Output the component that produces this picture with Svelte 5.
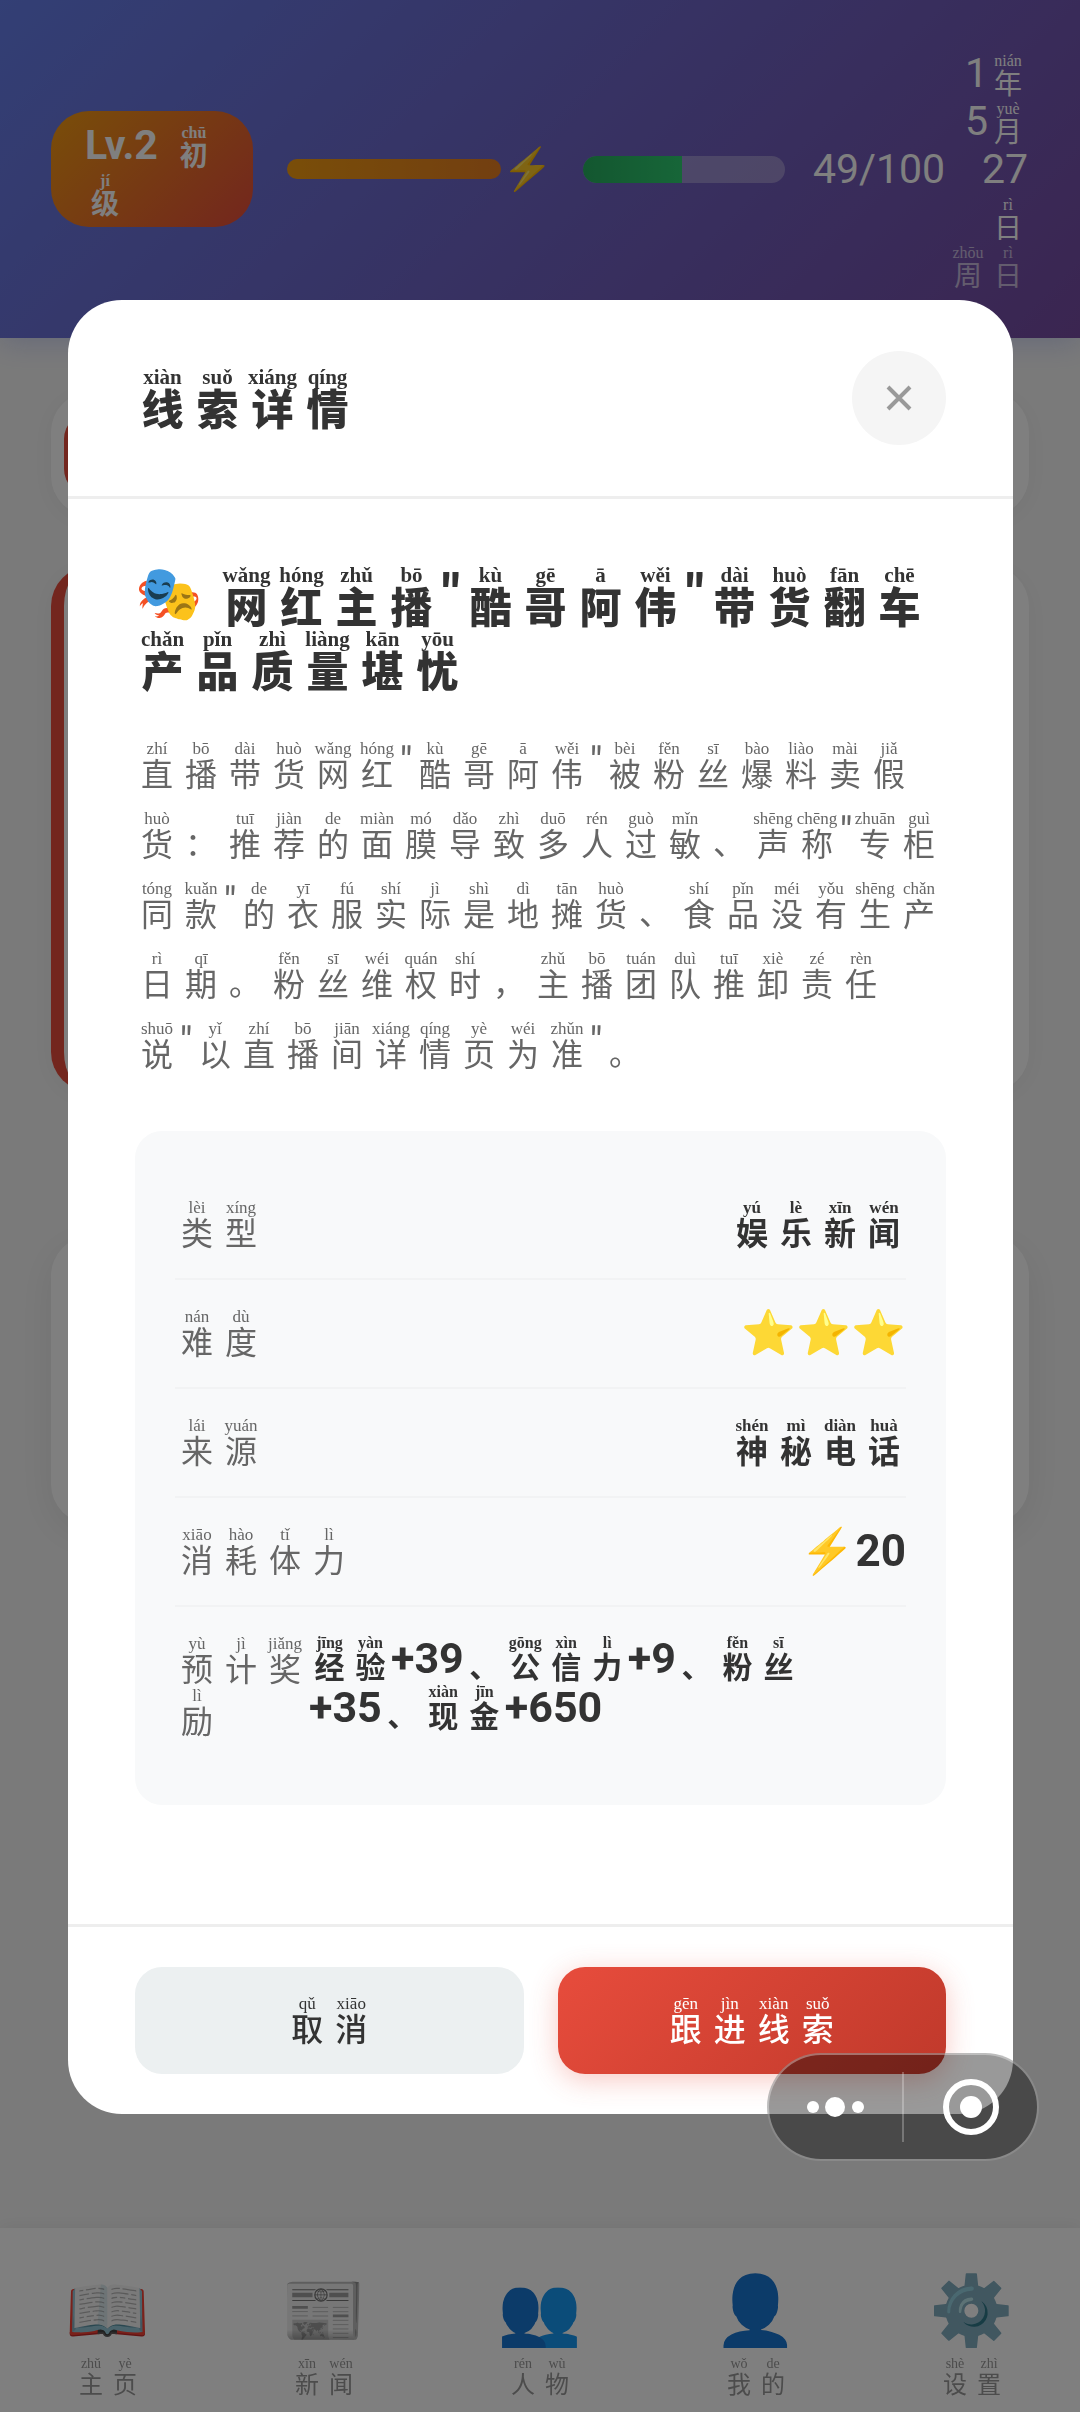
<script>
  const level = 'Lv.2 初chū 级jí';
  const date = ['1 年nián', '5 月yuè', '27', '日rì'];
  const weekday = '周zhōu 日rì';
  const energy = { value: 49, max: 100 };

  const clue = {
    title:
      '网wǎng 红hóng 主zhǔ 播bō " 酷kù 哥gē 阿ā 伟wěi " 带dài 货huò 翻fān 车chē 产chǎn 品pǐn 质zhì 量liàng 堪kān 忧yōu',
    description:
      '直zhí 播bō 带dài 货huò 网wǎng 红hóng " 酷kù 哥gē 阿ā 伟wěi " 被bèi 粉fěn 丝sī 爆bào 料liào 卖mài 假jiǎ 货huò ： ' +
      '推tuī 荐jiàn 的de 面miàn 膜mó 导dǎo 致zhì 多duō 人rén 过guò 敏mǐn 、 声shēng 称chēng " 专zhuān 柜guì 同tóng 款kuǎn " ' +
      '的de 衣yī 服fú 实shí 际jì 是shì 地dì 摊tān 货huò 、 食shí 品pǐn 没méi 有yǒu 生shēng 产chǎn 日rì 期qī 。 ' +
      '粉fěn 丝sī 维wéi 权quán 时shí ， 主zhǔ 播bō 团tuán 队duì 推tuī 卸xiè 责zé 任rèn 说shuō_"_以yǐ ' +
      '直zhí 播bō 间jiān 详xiáng 情qíng 页yè 为wéi 准zhǔn " 。'
  };

  const rows = [
    { label: '类lèi 型xíng', value: '娱yú 乐lè 新xīn 闻wén' },
    { label: '难nán 度dù', value: '⭐⭐⭐' },
    { label: '来lái 源yuán', value: '神shén 秘mì 电diàn 话huà' },
    { label: '消xiāo 耗hào 体tǐ 力lì', value: '⚡ 20' },
    {
      label: '预yù 计jì 奖jiǎng 励lì',
      value: '经jīng 验yàn +39 、 公gōng 信xìn 力lì +9 、 粉fěn 丝sī +35_、_现xiàn 金jīn +650',
      wide: true
    }
  ];

  const tabs = [
    { icon: '📖', label: '主zhǔ 页yè' },
    { icon: '📰', label: '新xīn 闻wén' },
    { icon: '👥', label: '人rén 物wù' },
    { icon: '👤', label: '我wǒ 的de' },
    { icon: '⚙️', label: '设shè 置zhì' }
  ];

  // "字zì" tokens are split by spaces, "_" keeps tokens on one line
  function parse(text) {
    return text.split(' ').map((group) =>
      group.split('_').map((token) => {
        if (/^[\u4e00-\u9fff]/.test(token)) return { type: 'zi', char: token[0], pinyin: token.slice(1) };
        if (/^[、，。：]/.test(token)) return { type: 'mark', char: token };
        if (token === '"') return { type: 'quote', char: token };
        return { type: 'latin', char: token };
      })
    );
  }
</script>

{#snippet pinyin(text)}
  {#each parse(text) as group}<span class="group">{#each group as t}{#if t.type === 'zi'}<span class="zi"><span class="py">{t.pinyin}</span><span class="han">{t.char}</span></span>{:else}<span class={t.type}>{t.char}</span>{/if}{/each}</span><wbr />{/each}
{/snippet}

<div class="page">
  <header class="status-bar">
    <div class="level">{@render pinyin(level)}</div>
    <div class="exp">
      <div class="exp-bar"></div>
      <span class="bolt">⚡</span>
    </div>
    <div class="energy-bar">
      <div class="energy-fill" style="width: {(energy.value / energy.max) * 100}%"></div>
    </div>
    <span class="energy-text">{energy.value}/{energy.max}</span>
    <div class="date">
      {#each date as line}
        <div>{@render pinyin(line)}</div>
      {/each}
      <div class="weekday">{@render pinyin(weekday)}</div>
    </div>
  </header>

  <main class="content">
    <div class="card filter"><div class="filter-active"></div></div>
    <div class="card news"></div>
    <div class="card summary"></div>
  </main>

  <nav class="tab-bar">
    {#each tabs as tab}
      <a class="tab" href="#tab">
        <span class="tab-icon">{tab.icon}</span>
        <span class="tab-label">{@render pinyin(tab.label)}</span>
      </a>
    {/each}
  </nav>
</div>

<div class="overlay">
  <div class="modal" role="dialog" aria-modal="true">
    <div class="modal-header">
      <h2 class="modal-title">{@render pinyin('线xiàn 索suǒ 详xiáng 情qíng')}</h2>
      <button class="modal-close" aria-label="close">
        <svg viewBox="0 0 26 26" width="26" height="26" fill="none" stroke="#999" stroke-width="4">
          <path d="M2 2l22 22M24 2L2 24" />
        </svg>
      </button>
    </div>

    <div class="modal-body">
      <h3 class="clue-title"><span class="clue-icon">🎭</span>{@render pinyin(clue.title)}</h3>
      <p class="clue-desc">{@render pinyin(clue.description)}</p>
      <dl class="info">
        {#each rows as row}
          <div class="info-row" class:wide={row.wide}>
            <dt>{@render pinyin(row.label)}</dt>
            <dd>{@render pinyin(row.value)}</dd>
          </div>
        {/each}
      </dl>
    </div>

    <div class="modal-footer">
      <button class="btn cancel">{@render pinyin('取qǔ 消xiāo')}</button>
      <button class="btn confirm">{@render pinyin('跟gēn 进jìn 线xiàn 索suǒ')}</button>
    </div>
  </div>
</div>

<div class="capsule">
  <button aria-label="menu">
    <svg viewBox="0 0 60 60" width="60" height="60" fill="#fff">
      <circle cx="7" cy="30" r="6" />
      <circle cx="29" cy="30" r="10" />
      <circle cx="52" cy="30" r="6" />
    </svg>
  </button>
  <span class="capsule-line"></span>
  <button aria-label="exit">
    <svg viewBox="0 0 60 60" width="60" height="60">
      <circle cx="30" cy="30" r="25" fill="none" stroke="#fff" stroke-width="6" />
      <circle cx="30" cy="30" r="11" fill="#fff" />
    </svg>
  </button>
</div>

<style>
  :global(body) {
    margin: 0;
    background: #f5f5f5;
  }

  .page,
  .overlay {
    --cell: 44px;
    --han: 32px;
    --py: 17px;
    font-family: Roboto, 'Noto Sans CJK SC', 'Noto Color Emoji', sans-serif;
    box-sizing: border-box;
  }

  /* pinyin text */
  .group {
    white-space: nowrap;
  }

  .zi,
  .mark {
    display: inline-block;
    width: var(--cell);
    margin: -8px 0;
    text-align: center;
    vertical-align: middle;
    font-size: var(--han);
    line-height: 1;
  }

  .py {
    display: flex;
    justify-content: center;
    padding-bottom: 2px;
    font-family: 'Liberation Serif', serif;
    font-size: var(--py);
    line-height: 1;
  }

  .han,
  .mark {
    font-family: 'Liberation Sans', 'Noto Sans CJK SC', sans-serif;
  }

  .han {
    display: block;
  }

  .mark {
    padding-top: var(--py);
  }

  .quote {
    display: inline-block;
    width: 14px;
    text-align: center;
  }

  .page {
    display: flex;
    flex-direction: column;
    min-height: 100vh;
    background: #f5f5f5;
  }

  .status-bar {
    display: flex;
    align-items: center;
    box-sizing: border-box;
    height: 338px;
    padding: 0 52px 0 51px;
    background: linear-gradient(135deg, #667eea, #764ba2);
    box-shadow: 0 4px 28px rgba(102, 126, 234, 0.3);
    color: #fff;
    font-size: 41px;
    line-height: 48px;
    --cell: 40px;
    --han: 28px;
    --py: 16px;
  }

  .level {
    box-sizing: border-box;
    width: 202px;
    padding: 10px 34px;
    border-radius: 38px;
    background: linear-gradient(135deg, #f39c12, #e74c3c);
    font-weight: 700;
  }

  .level .group:first-child {
    margin-right: 16px;
  }

  .exp {
    display: flex;
    align-items: center;
    margin-left: 34px;
  }

  .exp-bar {
    width: 214px;
    height: 20px;
    border-radius: 10px;
    background: linear-gradient(90deg, #f39c12, #e67e22);
  }

  .bolt {
    width: 54px;
    text-align: center;
  }

  .energy-bar {
    width: 202px;
    height: 27px;
    margin: 0 28px;
    border-radius: 14px;
    background: rgba(255, 255, 255, 0.3);
    overflow: hidden;
  }

  .energy-fill {
    height: 100%;
    background: linear-gradient(90deg, #27ae60, #2ecc71);
  }

  .date {
    flex: 1;
    text-align: right;
  }

  .weekday {
    opacity: 0.6;
  }

  .content {
    display: flex;
    flex-direction: column;
    flex: 1;
    padding: 54px 51px;
  }

  .card {
    box-sizing: border-box;
    border-radius: 40px;
    background: #fff;
    box-shadow: 0 4px 28px rgba(0, 0, 0, 0.05);
  }

  .filter {
    height: 124px;
    padding: 20px 13px;
  }

  .filter-active {
    width: 300px;
    height: 84px;
    border-radius: 27px;
    background: #e74c3c;
  }

  .news {
    height: 526px;
    margin-top: 50px;
    border-left: 13px solid #e74c3c;
  }

  .summary {
    height: 288px;
    margin-top: 144px;
    box-shadow: 0 10px 40px rgba(0, 0, 0, 0.08);
  }

  .tab-bar {
    display: flex;
    position: fixed;
    right: 0;
    bottom: 0;
    left: 0;
    height: 184px;
    background: #fff;
    box-shadow: 0 -3px 14px rgba(0, 0, 0, 0.05);
    --cell: 34px;
    --han: 24px;
    --py: 14px;
  }

  .tab {
    display: flex;
    flex: 1;
    flex-direction: column;
    align-items: center;
    padding-top: 45px;
    color: #999;
    text-decoration: none;
  }

  .tab-icon {
    font-size: 68px;
    line-height: 76px;
  }

  .tab-label {
    margin-top: 6px;
    line-height: 42px;
  }

  .overlay {
    display: flex;
    position: fixed;
    inset: 0;
    align-items: center;
    padding: 2px 67px 0 68px;
    background: rgba(0, 0, 0, 0.5);
    color: #333;
  }

  .modal {
    width: 100%;
    border-radius: 54px;
    background: #fff;
    overflow: hidden;
  }

  .modal-header {
    display: flex;
    align-items: center;
    justify-content: space-between;
    padding: 51px 67px;
    border-bottom: 3px solid #eee;
  }

  .modal-title,
  .clue-title {
    margin: 0;
    font-weight: 900;
    --cell: 55px;
    --han: 42px;
    --py: 21px;
  }

  .modal-title {
    line-height: 64px;
  }

  .modal-close {
    display: flex;
    align-items: center;
    justify-content: center;
    width: 94px;
    height: 94px;
    padding: 0;
    border: 0;
    border-radius: 50%;
    background: #f5f5f5;
  }

  .modal-body {
    padding: 63px 67px 119px;
  }

  .clue-title {
    font-size: 54px;
    line-height: 64px;
  }

  .clue-title .quote {
    width: 24px;
  }

  .clue-icon {
    display: inline-block;
    width: 84px;
    font-weight: 400;
  }

  .clue-desc {
    margin: 37px 0 54px;
    color: #666;
    font-size: 41px;
    line-height: 70px;
  }

  .info {
    margin: 0;
    padding: 40px;
    border-radius: 27px;
    background: #f8f9fa;
  }

  .info-row {
    display: flex;
    justify-content: space-between;
    padding: 27px 0;
    border-bottom: 2px solid #f2f3f4;
    font-size: 44px;
    line-height: 53px;
  }

  .info-row:last-child {
    border-bottom: 0;
  }

  .info .zi,
  .info .mark {
    margin: -12px 0 -6px;
  }

  dt {
    color: #666;
  }

  dd {
    margin: 0;
    font-weight: 700;
  }

  .wide dt {
    flex: 0 0 134px;
    line-height: 52px;
  }

  .wide dd {
    flex: 1;
    font-size: 43px;
    line-height: 49px;
    --cell: 41px;
    --han: 30px;
    --py: 16px;
  }

  .modal-footer {
    display: flex;
    gap: 34px;
    padding: 40px 67px;
    border-top: 3px solid #eee;
  }

  .btn {
    flex: 1;
    height: 107px;
    padding: 0;
    border: 0;
    border-radius: 27px;
    font: inherit;
    font-weight: 500;
  }

  .btn .py {
    font-weight: 400;
  }

  .cancel {
    background: #ecf0f1;
    color: #333;
  }

  .confirm {
    background: linear-gradient(135deg, #e74c3c, #c0392b);
    box-shadow: 0 6px 28px rgba(231, 76, 60, 0.3);
    color: #fff;
  }

  /* floats over everything, the modal included */
  .capsule {
    display: flex;
    position: fixed;
    right: 41px;
    bottom: 251px;
    align-items: center;
    box-sizing: border-box;
    width: 272px;
    height: 108px;
    border: 2px solid rgba(255, 255, 255, 0.35);
    border-radius: 54px;
    background: rgba(0, 0, 0, 0.4);
  }

  .capsule button {
    display: flex;
    flex: 1;
    align-items: center;
    justify-content: center;
    padding: 0;
    border: 0;
    background: none;
  }

  .capsule-line {
    width: 2px;
    height: 70px;
    background: rgba(255, 255, 255, 0.25);
  }
</style>
